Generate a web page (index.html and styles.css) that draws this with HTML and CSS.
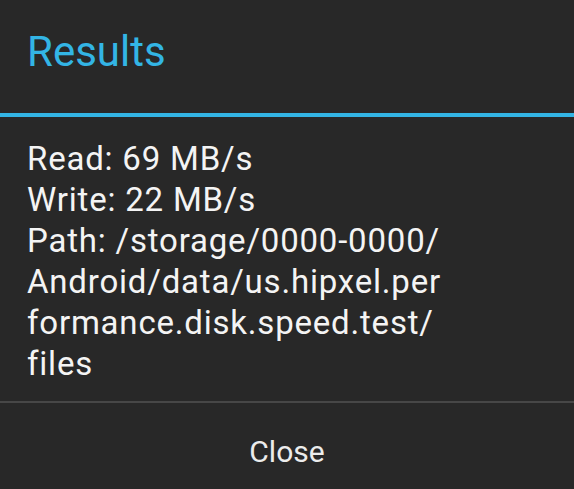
FILE: index.html
```html
<!DOCTYPE html>
<html>
<head>
<meta charset="utf-8">
<link rel="stylesheet" href="styles.css">
</head>
<body>
<div class="dialog">
  <div class="title">Results</div>
  <div class="accent"></div>
  <div class="message">
    <div>Read: 69 MB/s</div>
    <div>Write: 22 MB/s</div>
    <div>Path: /storage/0000-0000/</div>
    <div>Android/data/us.hipxel.per</div>
    <div>formance.disk.speed.test/</div>
    <div>files</div>
  </div>
  <div class="divider"></div>
  <div class="buttons"><span class="btn">Close</span></div>
</div>
</body>
</html>
```

FILE: styles.css
```css
html, body {
  margin: 0;
  padding: 0;
  background: #282828;
}
.dialog {
  width: 574px;
  height: 489px;
  background: #282828;
  font-family: Roboto, "Noto Sans", sans-serif;
  display: flex;
  flex-direction: column;
  overflow: hidden;
}
.title {
  height: 113px;
  box-sizing: border-box;
  padding-left: 27px;
  padding-top: 26px;
  font-size: 42px;
  line-height: 52px;
  color: #33b5e5;
}
.accent {
  height: 4px;
  background: #33b5e5;
}
.message {
  padding: 21px 27px 0 27px;
  height: 284px;
  box-sizing: border-box;
  font-size: 33px;
  letter-spacing: 0.8px;
  line-height: 41px;
  color: #f4f4f4;
  white-space: nowrap;
}
.divider {
  height: 2px;
  background: #474747;
}
.buttons {
  flex: 1;
  display: flex;
  align-items: center;
  justify-content: center;
}
.btn {
  font-size: 30px;
  color: #ececec;
  padding-top: 10px;
}
```
